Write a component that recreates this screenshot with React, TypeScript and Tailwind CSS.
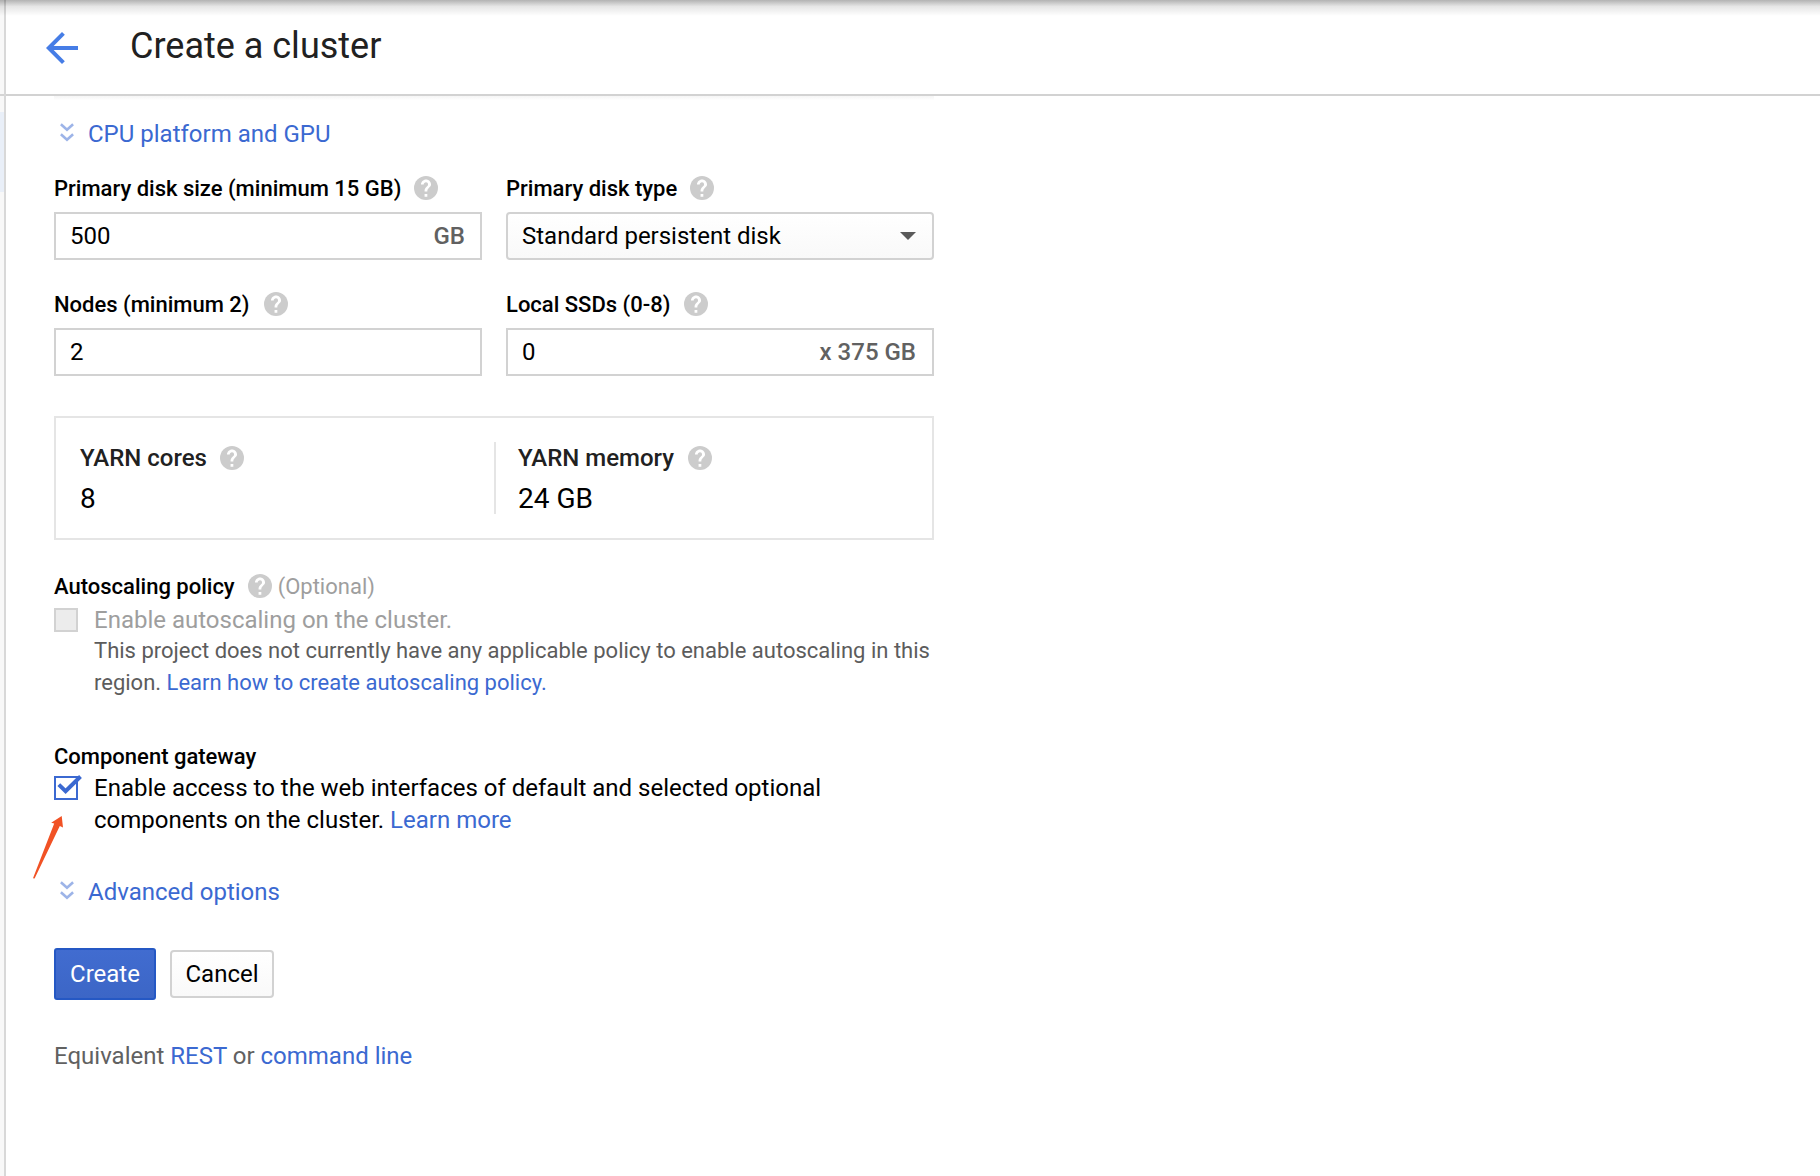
import type { ReactNode } from "react";

function Help({ className = "" }: { className?: string }) {
  return (
    <svg viewBox="2 2 20 20" className={`size-6 shrink-0 fill-[#cccccc] ${className}`} aria-hidden="true">
      <circle cx="12" cy="12" r="10" />
      <path
        className="fill-white"
        d="M13.100 19.200h-2.300V17h2.300v2.200zm1.970-7.950l-.9.920C13.450 12.900 13.100 13.500 13.100 15h-2.300v-.5c0-1.100.35-2.100 1.070-2.830l1.240-1.260c.37-.36.59-.86.59-1.410 0-1.100-.7-1.800-1.700-1.800s-1.900.8-1.900 1.900H7.800c0-2.210 1.890-4.200 4.200-4.200s4.200 1.890 4.200 4.200c0 .88-.46 1.580-1.130 2.150z"
      />
    </svg>
  );
}

function Expander({ children }: { children: ReactNode }) {
  return (
    <a className="flex h-8 items-center text-2xl leading-8 text-[#3b69d1]">
      <svg viewBox="0 0 14 20" className="mr-3.5 ml-1.5 h-5 w-3.5 -translate-y-0.5 fill-none stroke-[#9db4e8]" aria-hidden="true">
        <path strokeWidth="2.600" d="M.9 2.300L7 7.700l6.100-5.400M.9 12.300L7 17.700l6.100-5.400" />
      </svg>
      {children}
    </a>
  );
}

function Label({ children, helpGap = "ml-[13px]" }: { children: ReactNode; helpGap?: string }) {
  return (
    <div className="flex h-6 items-center text-[22px] leading-6 font-medium text-black">
      <span className="pt-0.5">{children}</span>
      <Help className={helpGap} />
    </div>
  );
}

function Field({
  label,
  value,
  unit,
  helpGap,
  padding = "pr-[15px]",
}: {
  label: string;
  value: string;
  unit?: string;
  helpGap?: string;
  padding?: string;
}) {
  return (
    <div className="w-[428px]">
      <Label helpGap={helpGap}>{label}</Label>
      <div className={`mt-3 flex h-12 items-center justify-between border-2 border-[#d2d2d2] pl-3.5 text-2xl leading-8 text-black ${padding}`}>
        <span>{value}</span>
        {unit && <span className="font-medium text-[#616161]">{unit}</span>}
      </div>
    </div>
  );
}

function Stat({ label, value, helpGap }: { label: string; value: string; helpGap: string }) {
  return (
    <div className="flex-1">
      <div className="mt-1 flex h-6 items-center text-2xl leading-6 font-medium text-[#212121]">
        <span>{label}</span>
        <Help className={helpGap} />
      </div>
      <div className="mt-[13px] text-[28px] leading-8 text-black">{value}</div>
    </div>
  );
}

export default function App() {
  return (
    <div className="relative flex h-[1176px] w-[1820px] overflow-hidden bg-white font-['Roboto',sans-serif]">
      <aside className="w-1 shrink-0 bg-[#f8f8f8]">
        <div className="h-[94px]" />
        <div className="h-0.5 bg-[#d4d4d4]" />
        <div className="mt-4 h-20 bg-[#e9eff8]" />
      </aside>
      <main className="flex-1 border-l-2 border-[#d8d8d8]">
        <header className="flex h-24 items-center border-b-2 border-[#d2d2d2] pl-8">
          <svg viewBox="0 0 24 24" className="size-12 translate-y-px fill-[#467de6]" aria-hidden="true">
            <path d="M20 11H7.830l5.590-5.590L12 4l-8 8 8 8 1.410-1.410L7.830 13H20v-2z" />
          </svg>
          <h1 className="ml-11 -translate-y-px text-4xl leading-10 text-[#212121]">Create a cluster</h1>
        </header>
        <div className="ml-12 w-[880px]">
          <div className="h-[22px] bg-linear-to-b from-[#f5f5f5] to-white to-20%" />
          <Expander>CPU platform and GPU</Expander>
          <div className="mt-[26px] flex gap-6">
            <Field label="Primary disk size (minimum 15 GB)" value="500" unit="GB" />
            <div className="w-[428px]">
              <Label>Primary disk type</Label>
              <div className="mt-3 flex h-12 items-center justify-between rounded-[4px] border-2 border-[#d2d2d2] bg-linear-to-b from-white to-[#f9f9f9] pr-4 pl-3.5 text-2xl leading-8 text-black">
                <span>Standard persistent disk</span>
                <svg viewBox="0 0 16 8" className="h-2 w-4 fill-[#5a5a5a]" aria-hidden="true">
                  <path d="M0 0h16L8 8z" />
                </svg>
              </div>
            </div>
          </div>
          <div className="mt-8 flex gap-6">
            <Field label="Nodes (minimum 2)" value="2" helpGap="ml-3.5" />
            <Field label="Local SSDs (0-8)" value="0" unit="x 375 GB" helpGap="ml-3.5" padding="pr-4" />
          </div>
          <section className="mt-10 flex h-[124px] border-2 border-[#e5e5e5] py-6 pl-6">
            <Stat label="YARN cores" value="8" helpGap="ml-[13px]" />
            <div className="mr-[22px] w-0.5 bg-[#e5e5e5]" />
            <Stat label="YARN memory" value="24 GB" helpGap="ml-3.5" />
          </section>
          <section className="mt-[34px]">
            <div className="flex items-center">
              <Label>Autoscaling policy</Label>
              <span className="ml-1.5 pt-0.5 text-[22px] leading-[22px] text-[#9e9e9e]">(Optional)</span>
            </div>
            <div className="mt-1.5 flex">
              <div className="mt-1 size-6 border-2 border-[#d2d2d2] bg-[#ececec]" />
              <div className="ml-4">
                <div className="h-[31px] text-2xl leading-8 text-[#9e9e9e]">Enable autoscaling on the cluster.</div>
                <p className="text-[22px] leading-8 whitespace-nowrap text-[#5c5c5c]">
                  This project does not currently have any applicable policy to enable autoscaling in this
                  <br />
                  region. <a className="text-[#3b69d1]">Learn how to create autoscaling policy.</a>
                </p>
              </div>
            </div>
          </section>
          <section className="mt-11">
            <h2 className="h-[29px] text-[22px] leading-7 font-medium text-black">Component gateway</h2>
            <div className="flex">
              <svg viewBox="0 0 28 26" className="mt-1 h-[26px] w-7 -translate-y-0.5 fill-none stroke-[#3b69d1]" aria-hidden="true">
                <path strokeWidth="2" d="M1 3h22v22H1z" />
                <path strokeWidth="4" d="M4.800 10.600l6.800 6.600L26.500 2.500" />
              </svg>
              <p className="ml-3 text-2xl leading-8 whitespace-nowrap text-black">
                Enable access to the web interfaces of default and selected optional
                <br />
                components on the cluster. <a className="text-[#3b69d1]">Learn more</a>
              </p>
            </div>
          </section>
          <div className="mt-10">
            <Expander>Advanced options</Expander>
          </div>
          <div className="mt-10 flex items-center gap-3.5">
            <button className="h-[52px] w-[102px] rounded-[3px] border-2 border-[#2558c4] bg-linear-to-b from-[#416cd0] to-[#3c66c6] text-2xl leading-8 text-white">Create</button>
            <button className="h-12 w-[104px] rounded-[4px] border-2 border-[#d2d2d2] bg-linear-to-b from-white to-[#f9f9f9] text-2xl leading-8 text-black">Cancel</button>
          </div>
          <p className="mt-10 text-2xl leading-8 text-[#616161]">
            Equivalent <a className="text-[#3b69d1]">REST</a> or <a className="text-[#3b69d1]">command line</a>
          </p>
        </div>
      </main>
      <div className="absolute inset-x-0 top-0 h-4 bg-linear-to-b from-black/30 via-black/10 via-40% to-transparent" />
      <svg viewBox="0 0 32 66" className="absolute top-[814px] left-8 h-[66px] w-8 fill-[#f15225]" aria-hidden="true">
        <path d="M29.700 2L31 13.600l-3.200-1.600L2.600 64.400 1 64.200 22.200 9.600l-3-.8z" />
      </svg>
    </div>
  );
}
